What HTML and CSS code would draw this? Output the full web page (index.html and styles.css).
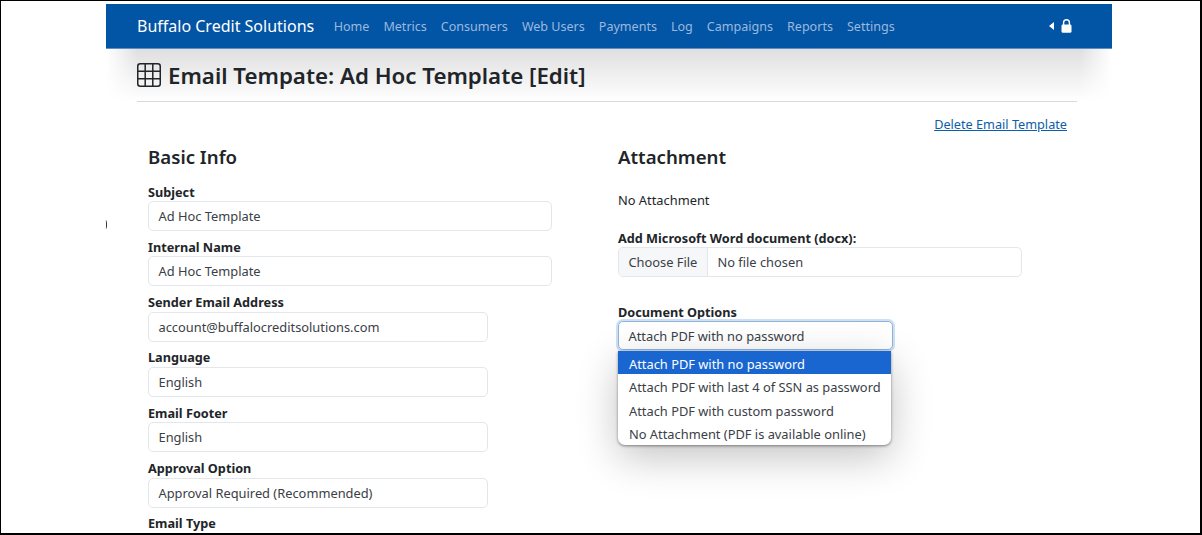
FILE: index.html
```html
<!DOCTYPE html>
<html lang="en">
<head>
<meta charset="utf-8">
<title>Email Template</title>
<link rel="stylesheet" href="styles.css">
</head>
<body>
<div class="frame">
  <span class="stray"></span>
  <div class="page">
    <nav class="navbar">
      <a class="brand">Buffalo Credit Solutions</a>
      <div class="nav-links">
        <a>Home</a><a>Metrics</a><a>Consumers</a><a>Web Users</a><a>Payments</a><a>Log</a><a>Campaigns</a><a>Reports</a><a>Settings</a>
      </div>
      <div class="nav-end">
        <svg class="caret" width="5" height="8" viewBox="0 0 5 8"><path d="M5 0v8L0 4z" fill="#fff"/></svg>
        <svg class="lock" width="11" height="14" viewBox="0 0 11 14"><path d="M2.6 6V3.6a2.9 2.9 0 0 1 5.8 0V6" fill="none" stroke="#fff" stroke-width="1.4"/><rect x="0.5" y="5.6" width="10" height="8.2" rx="1.4" fill="#fff"/></svg>
      </div>
    </nav>
    <main class="content">
      <header class="title-row">
        <svg class="grid-icon" width="24" height="24" viewBox="0 0 24 24"><rect x="0.75" y="0.75" width="22.5" height="22.5" rx="2.5" fill="none" stroke="#212529" stroke-width="1.5"/><path d="M8.2 1v22M15.8 1v22M1 8.2h22M1 15.8h22" stroke="#212529" stroke-width="1.5" fill="none"/></svg>
        <h1>Email Tempate: Ad Hoc Template [Edit]</h1>
      </header>
      <div class="actions"><a class="delete">Delete Email Template</a></div>
      <div class="columns">
        <section class="col-left">
          <h2>Basic Info</h2>
          <div class="field"><div class="label">Subject</div><div class="input wide">Ad Hoc Template</div></div>
          <div class="field"><div class="label">Internal Name</div><div class="input wide">Ad Hoc Template</div></div>
          <div class="field"><div class="label">Sender Email Address</div><div class="input">account@buffalocreditsolutions.com</div></div>
          <div class="field"><div class="label">Language</div><div class="input">English</div></div>
          <div class="field"><div class="label">Email Footer</div><div class="input">English</div></div>
          <div class="field"><div class="label">Approval Option</div><div class="input">Approval Required (Recommended)</div></div>
          <div class="field"><div class="label">Email Type</div><div class="input"></div></div>
        </section>
        <section class="col-right">
          <h2>Attachment</h2>
          <p class="none">No Attachment</p>
          <div class="label add-label">Add Microsoft Word document (docx):</div>
          <div class="file"><span class="file-btn">Choose File</span><span class="file-name">No file chosen</span></div>
          <div class="label doc-label">Document Options</div>
          <div class="select-wrap">
            <div class="select">Attach PDF with no password</div>
            <ul class="menu">
              <li class="active">Attach PDF with no password</li>
              <li>Attach PDF with last 4 of SSN as password</li>
              <li>Attach PDF with custom password</li>
              <li>No Attachment (PDF is available online)</li>
            </ul>
          </div>
        </section>
      </div>
    </main>
  </div>
</div>
</body>
</html>
```
FILE: styles.css
```css
* { box-sizing: border-box; }
html, body { margin: 0; padding: 0; background: #fff; }
body {
  font-family: "Noto Sans", "Open Sans", sans-serif;
  color: #212529;
  font-size: 12.85px;
}
.frame {
  position: relative;
  width: 1202px;
  height: 535px;
  border: 1px solid #000;
  border-width: 1px 2px 2px 1px;
  overflow: hidden;
  padding: 3px 0 0 105px;
}
.stray {
  position: absolute;
  left: 103px;
  top: 219px;
  width: 3px;
  height: 9px;
  border-right: 1px solid #333;
  border-radius: 50%;
}
.page { width: 1006px; }
.navbar {
  display: flex;
  align-items: center;
  height: 44.5px;
  padding: 0 40px 0 31px;
  background: #0254a5;
  border-bottom: 1px solid #5d8fc4;
  position: relative;
  z-index: 2;
}
.brand { color: #fff; font-size: 16px; margin-right: 19.5px; }
.nav-links { display: flex; gap: 14px; flex: 1; padding-top: 1px; }
.nav-links a { color: #9cb9dd; font-size: 12.55px; }
.nav-end { display: flex; align-items: center; gap: 7px; }
.content { position: relative; padding: 0 35px 0 31px; }
.content::before {
  content: "";
  position: absolute;
  left: 0;
  right: 0;
  top: 0;
  height: 52px;
  background: linear-gradient(#dfdfdf, #fff);
  -webkit-mask-image: linear-gradient(90deg, transparent, #000 32px, #000 calc(100% - 32px), transparent);
  mask-image: linear-gradient(90deg, transparent, #000 32px, #000 calc(100% - 32px), transparent);
}
.title-row {
  position: relative;
  display: flex;
  align-items: center;
  gap: 7px;
  height: 53px;
  padding-top: 1px;
  border-bottom: 1px solid #d9d9d9;
}
h1 { margin: 0; font-size: 22.3px; font-weight: 600; }
.actions { display: flex; justify-content: flex-end; padding: 13px 10px 0 0; height: 41.5px; }
.delete { color: #0b5ea8; text-decoration: underline; font-size: 12.7px; }
.columns { display: flex; padding-left: 11px; }
.col-left { width: 470px; }
.col-right { width: 410px; }
h2 { margin: 0 0 12px; font-size: 18.65px; font-weight: 600; line-height: 26px; padding-top: 1px; }
.col-left h2 { margin-bottom: 12.5px; }
.field { height: 55.33px; padding-top: 1px; }
.label { font-weight: 700; font-size: 12.7px; line-height: 17.5px; }
.input {
  width: 340px;
  height: 30px;
  padding: 0 9.5px;
  line-height: 29px;
  border: 1px solid #e3e6ea;
  border-radius: 5px;
  color: #3a4046;
}
.input.wide { width: 404px; }
.none { margin: 0 0 18px; padding-top: 5px; line-height: 26px; }
.add-label { line-height: 15.5px; }
.file {
  display: flex;
  width: 404px;
  height: 30px;
  line-height: 29px;
  border: 1px solid #e3e6ea;
  border-radius: 5px;
  overflow: hidden;
  color: #3a4046;
}
.file-btn { padding: 0 9.5px; background: #f6f7f8; border-right: 1px solid #e3e6ea; }
.file-name { padding-left: 9.5px; }
.doc-label { margin-top: 27.5px; line-height: 17px; }
.select-wrap { position: relative; width: 275px; }
.select {
  height: 29px;
  padding: 0 9.5px;
  line-height: 28px;
  border: 1px solid #8fb4dc;
  border-radius: 5px;
  box-shadow: 0 0 0 2px #cfe0f2;
  background: #fff;
  color: #3a4046;
}
.menu {
  position: absolute;
  left: 0;
  top: 29.6px;
  width: 273px;
  margin: 0;
  padding: 0;
  list-style: none;
  background: #fff;
  border-radius: 0 0 7px 7px;
  overflow: hidden;
  box-shadow: 0 1px 3px rgba(0,0,0,.45), 0 12px 40px rgba(0,0,0,.24);
}
.menu li { height: 23.6px; line-height: 23px; padding: 2px 0 0 11px; color: #3a4046; white-space: nowrap; }
.menu li.active { background: #1a66d0; color: #fff; }
```
